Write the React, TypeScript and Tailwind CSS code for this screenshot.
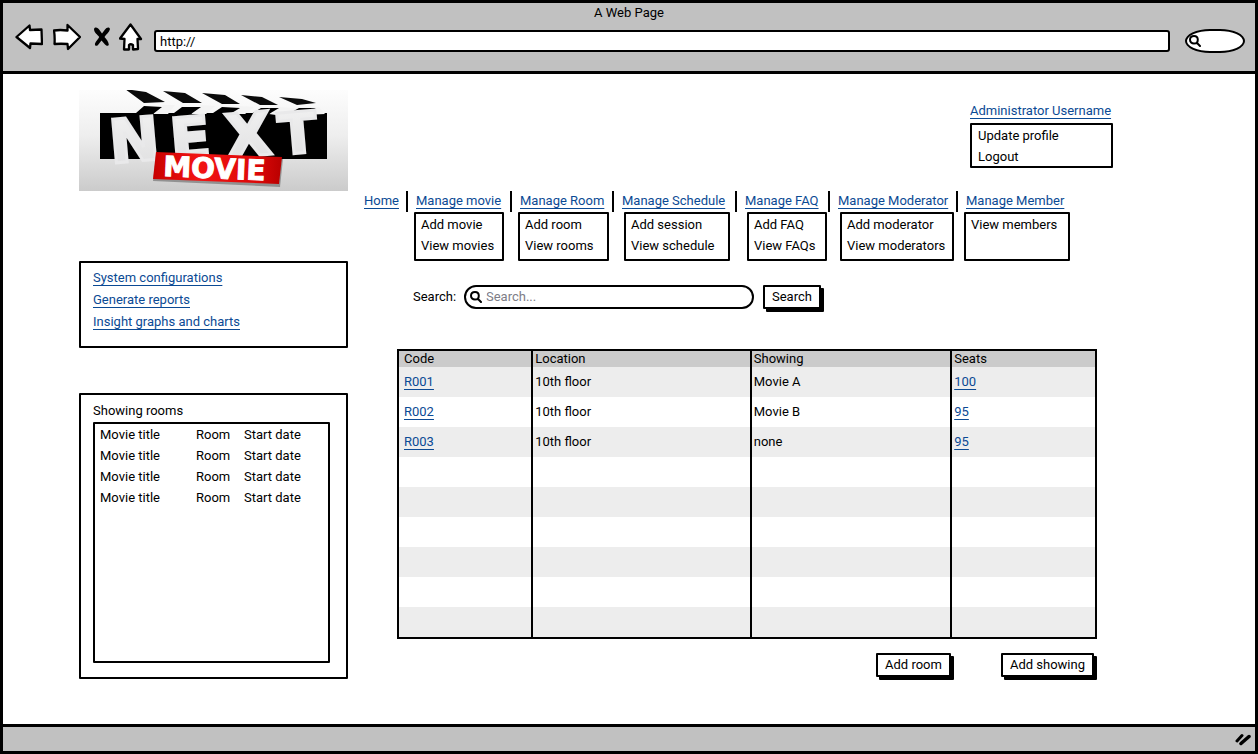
type Menu = { label: string; slot: string; panel: string; items: string[] };

const menus: Menu[] = [
  { label: "Manage movie", slot: "w-[104px]", panel: "-left-0.5 w-[90px]", items: ["Add movie", "View movies"] },
  { label: "Manage Room", slot: "w-[102px]", panel: "-left-0.5 w-[91px]", items: ["Add room", "View rooms"] },
  { label: "Manage Schedule", slot: "w-[123px]", panel: "left-0.5 w-[106px]", items: ["Add session", "View schedule"] },
  { label: "Manage FAQ", slot: "w-[93px]", panel: "left-0.5 w-[80px]", items: ["Add FAQ", "View FAQs"] },
  { label: "Manage Moderator", slot: "w-[128px]", panel: "left-0.5 w-[114px]", items: ["Add moderator", "View moderators"] },
  { label: "Manage Member", slot: "w-[100px]", panel: "-left-0.5 w-[106px]", items: ["View members"] },
];

const rooms = [
  { code: "R001", location: "10th floor", showing: "Movie A", seats: "100" },
  { code: "R002", location: "10th floor", showing: "Movie B", seats: "95" },
  { code: "R003", location: "10th floor", showing: "none", seats: "95" },
];
const emptyRows = [0, 1, 2, 3, 4, 5];
const showings = [0, 1, 2, 3];

const link = "text-[#0b4a94] underline decoration-1 underline-offset-[3px]";
const frame = "rounded-[1px] border-2 border-black bg-white";
const sketchButton =
  "h-6 shrink-0 whitespace-nowrap rounded-[1px] border-2 border-black bg-white px-[7px] leading-5 shadow-[3px_3px_0_#000]";

function Logo() {
  return (
    <svg viewBox="0 0 269 101" className="h-[101px] w-full" role="img" aria-label="Next Movie">
      <defs>
        <linearGradient id="backdrop" x1="0" y1="0" x2="0" y2="1">
          <stop offset="0" stopColor="#fdfdfd" />
          <stop offset="0.45" stopColor="#eeeeee" />
          <stop offset="1" stopColor="#cbcbcb" />
        </linearGradient>
        <linearGradient id="ribbon" x1="0" y1="0" x2="1" y2="0">
          <stop offset="0" stopColor="#c80000" />
          <stop offset="0.35" stopColor="#f21414" />
          <stop offset="0.8" stopColor="#dd0808" />
          <stop offset="1" stopColor="#b80000" />
        </linearGradient>
        <linearGradient id="letters" x1="0" y1="0" x2="0" y2="1">
          <stop offset="0" stopColor="#f3f3f3" />
          <stop offset="1" stopColor="#dededf" />
        </linearGradient>
      </defs>
      <rect width="269" height="101" fill="url(#backdrop)" />
      <path d="M21 23H248V69H21Z" fill="#000" />
      <path d="M74 24L84 15L96 15L89 24ZM112 24L122 15L136 16L127 24ZM151 24L161 16L175 17L166 24ZM190 24L200 17L213 18L240 17L246 24L204 26Z" fill="#f3f3f3" />
      <path
        d="M57 23L65 16L83 17L74 24ZM95 23L103 17L122 17L112 24ZM134 23L143 17L161 18L151 24ZM172 24L182 18L200 18L190 24ZM211 23L220 18L237 18L228 23Z"
        fill="#000"
      />
      <path
        d="M46 -1L67 2L86 12L65 13ZM84 1L106 3L123 13L104 13ZM123 3L146 5L161 14L143 14ZM162 5L183 7L199 15L181 15ZM200 7L223 9L237 13L218 15Z"
        fill="#0a0a0a"
      />
      <g fontFamily="'DejaVu Sans', sans-serif" fontWeight="700" fill="url(#letters)" stroke="#e9e9ea" strokeLinejoin="miter">
        <text x="30" y="71" fontSize="60" strokeWidth="3" transform="rotate(-5 58 50)">N</text>
        <text x="91" y="69" fontSize="59" strokeWidth="3" transform="rotate(-5 115 48)">E</text>
        <text x="146" y="66" fontSize="60" strokeWidth="3" transform="rotate(-5 171 45)">X</text>
        <text x="199" y="63" fontSize="57" strokeWidth="3" transform="rotate(-5 221 42)">T</text>
      </g>
      <path d="M77 64L204 69L201 97L74 91Z" fill="#000" opacity="0.3" />
      <path d="M77 62L203 67L200 94L74 89Z" fill="url(#ribbon)" />
      <text x="84" y="86" fontSize="28" fontWeight="700" fontFamily="'DejaVu Sans', sans-serif" fill="#fff" stroke="#fff" strokeWidth="1" transform="rotate(2.5 84 86)">
        MOVIE
      </text>
    </svg>
  );
}

function Magnifier({ className }: { className: string }) {
  return (
    <svg viewBox="0 0 12 12" className={className} fill="none" stroke="#000" strokeWidth="2" strokeLinecap="round" aria-hidden="true">
      <path d="M5 1C7.400 1 8.800 2.600 8.800 4.700C8.800 6.900 7.300 8.600 5 8.600C2.700 8.600 1 7 1 4.800C1 2.600 2.700 1 5 1ZM7.800 7.800L11 11" />
    </svg>
  );
}

function BrowserBar() {
  return (
    <header className="border-b-[3px] border-black bg-[#c1c1c1] pb-5">
      <p className="text-center leading-5">A Web Page</p>
      <div className="flex h-7 items-center pl-3 pr-2.5">
        <button type="button" aria-label="Back">
          <svg viewBox="0 0 28 28" className="size-7" fill="#fff" stroke="#000" strokeWidth="2.300" strokeLinejoin="round">
            <path d="M1.500 14L14.500 2.500L15 7L26.500 6.500L27 21L15.500 20.500L15 25Z" />
          </svg>
        </button>
        <button type="button" aria-label="Forward" className="ml-2.5">
          <svg viewBox="0 0 28 28" className="size-7" fill="#fff" stroke="#000" strokeWidth="2.300" strokeLinejoin="round">
            <path d="M1 7.500Q7 6.500 14.500 7.500V2L27 14L15 26L14.500 21Q8 20.500 1.500 21Q2 14 1 7.500Z" />
          </svg>
        </button>
        <button type="button" aria-label="Stop" className="ml-3">
          <svg viewBox="0 0 18 22" className="h-[22px] w-[18px]" fill="#000">
            <path d="M1 3C2 0.500 5 1.500 6.500 4L9 7.500L12 3.500C13.500 1.500 16 0.500 17 3C16.500 6 13 8.500 11.500 11C13.500 13.500 15.500 15.500 15.800 18.500C15.500 20.500 13.500 20 12 18.500L8.500 14.500L5 19C3.500 20.500 1.500 20 2 17.500C3 15 5 13.500 6.200 11C4.500 8.500 1 6.500 1 3Z" />
          </svg>
        </button>
        <button type="button" aria-label="Home page" className="ml-2">
          <svg viewBox="0 0 24 28" className="h-7 w-6" fill="#fff" stroke="#000" strokeWidth="2.300" strokeLinejoin="round">
            <path d="M11.500 1.500L22 16H18.500L19 26L14 26.500V22Q11.500 20.500 10 22V26.500H5L5.500 16L1 15.500Z" />
          </svg>
        </button>
        <input
          aria-label="Address"
          defaultValue="http://"
          className="ml-[11px] mt-2 h-[22px] min-w-0 flex-1 rounded-[3px] border-2 border-black bg-white px-1 outline-none"
        />
        <label className="ml-[15px] mt-2 flex h-6 w-[60px] items-center rounded-[50%/60%] border-2 border-black bg-white pl-0.5">
          <Magnifier className="size-3 shrink-0" />
          <input aria-label="Web search" className="w-full min-w-0 bg-transparent outline-none" />
        </label>
      </div>
    </header>
  );
}

function Sidebar() {
  return (
    <aside className="w-[269px] shrink-0 pt-4">
      <Logo />
      <nav className={`mt-[70px] flex h-[87px] flex-col items-start pl-3 pt-1 leading-[22px] ${frame}`}>
        <a href="#configurations" className={link}>System configurations</a>
        <a href="#reports" className={link}>Generate reports</a>
        <a href="#insights" className={link}>Insight graphs and charts</a>
      </nav>
      <section className={`mt-[45px] flex h-[286px] flex-col pb-3.5 pl-3 pr-4 pt-[5px] ${frame}`}>
        <h2 className="leading-[22px]">Showing rooms</h2>
        <div className={`flex-1 ${frame}`}>
          <table className="w-full table-fixed text-left">
            <colgroup>
              <col className="w-[101px]" />
              <col className="w-12" />
              <col />
            </colgroup>
            <tbody>
              {showings.map((row) => (
                <tr key={row} className="h-[21px] whitespace-nowrap">
                  <td className="pl-[5px]">Movie title</td>
                  <td>Room</td>
                  <td>Start date</td>
                </tr>
              ))}
            </tbody>
          </table>
        </div>
      </section>
    </aside>
  );
}

function MenuBar() {
  return (
    <nav className="mt-[23px]">
      <ul className="flex h-[21px] whitespace-nowrap leading-5">
        <li className="w-[42px]">
          <a href="#home" className={link}>Home</a>
        </li>
        {menus.map((menu) => (
          <li key={menu.label} className={`relative border-l-2 border-black pl-2 ${menu.slot}`}>
            <a href="#menu" className={link}>{menu.label}</a>
            <div className="absolute left-2 top-[21px]">
              <ul className={`relative h-[49px] pl-[5px] leading-[21px] ${menu.panel} ${frame}`}>
                {menu.items.map((item) => (
                  <li key={item}>{item}</li>
                ))}
              </ul>
            </div>
          </li>
        ))}
      </ul>
    </nav>
  );
}

function RoomTable() {
  const cell = "border-l-2 border-black pl-0.5 first:border-l-0 first:pl-[5px]";
  return (
    <div className="mt-10 border-2 border-black">
      <table className="w-full table-fixed border-separate border-spacing-0 text-left">
        <colgroup>
          <col className="w-[19%]" />
          <col className="w-[31.4%]" />
          <col className="w-[28.8%]" />
          <col />
        </colgroup>
        <thead>
          <tr className="h-4 bg-[#cbcbcb] leading-4">
            {["Code", "Location", "Showing", "Seats"].map((title) => (
              <th key={title} className={`font-normal ${cell}`}>{title}</th>
            ))}
          </tr>
        </thead>
        <tbody>
          {rooms.map((room) => (
            <tr key={room.code} className="h-[30px] odd:bg-[#ededed]">
              <td className={cell}><a href="#room" className={link}>{room.code}</a></td>
              <td className={cell}>{room.location}</td>
              <td className={cell}>{room.showing}</td>
              <td className={cell}><a href="#seats" className={link}>{room.seats}</a></td>
            </tr>
          ))}
          {emptyRows.map((row) => (
            <tr key={row} className="h-[30px] even:bg-white odd:bg-[#ededed]">
              <td className={cell} />
              <td className={cell} />
              <td className={cell} />
              <td className={cell} />
            </tr>
          ))}
        </tbody>
      </table>
    </div>
  );
}

export default function App() {
  return (
    <div className="flex min-h-screen flex-col border-[3px] border-black bg-white font-[Roboto,sans-serif] text-[13px] leading-5 text-black">
      <BrowserBar />
      <main className="flex flex-1 pl-[76px] pr-[142px]">
        <Sidebar />
        <div className="ml-4 min-w-0 flex-1 pt-[27px]">
          <div className="ml-auto w-[143px] whitespace-nowrap">
            <a href="#account" className={link}>Administrator Username</a>
            <ul className={`mt-0.5 h-[45px] pl-1.5 leading-[21px] ${frame}`}>
              <li>Update profile</li>
              <li>Logout</li>
            </ul>
          </div>
          <MenuBar />
          <form className="ml-[49px] mt-[73px] flex items-center" onSubmit={(event) => event.preventDefault()}>
            <label htmlFor="search" className="w-[51px]">Search:</label>
            <div className="flex h-6 w-[290px] items-center rounded-full border-2 border-black bg-white pl-1">
              <Magnifier className="size-3 shrink-0" />
              <input id="search" type="text" placeholder="Search..." className="ml-1 w-full min-w-0 rounded-full bg-transparent outline-none placeholder:text-[#7d7d86]" />
            </div>
            <button type="submit" className={`ml-[9px] ${sketchButton}`}>Search</button>
          </form>
          <div className="ml-[33px] mr-4">
            <RoomTable />
            <div className="mt-3.5 flex justify-end gap-[50px] pr-[3px]">
              <button type="button" className={sketchButton}>Add room</button>
              <button type="button" className={sketchButton}>Add showing</button>
            </div>
          </div>
        </div>
      </main>
      <footer className="flex h-[27px] items-center justify-end border-t-[3px] border-black bg-[#c1c1c1] pr-1">
        <svg viewBox="0 0 16 14" className="h-3.5 w-4" fill="none" stroke="#000" strokeLinecap="round" aria-hidden="true">
          <path d="M2 9L7 3.500" strokeWidth="3" />
          <path d="M6 11.500L14 4.500" strokeWidth="3.500" />
        </svg>
      </footer>
    </div>
  );
}
